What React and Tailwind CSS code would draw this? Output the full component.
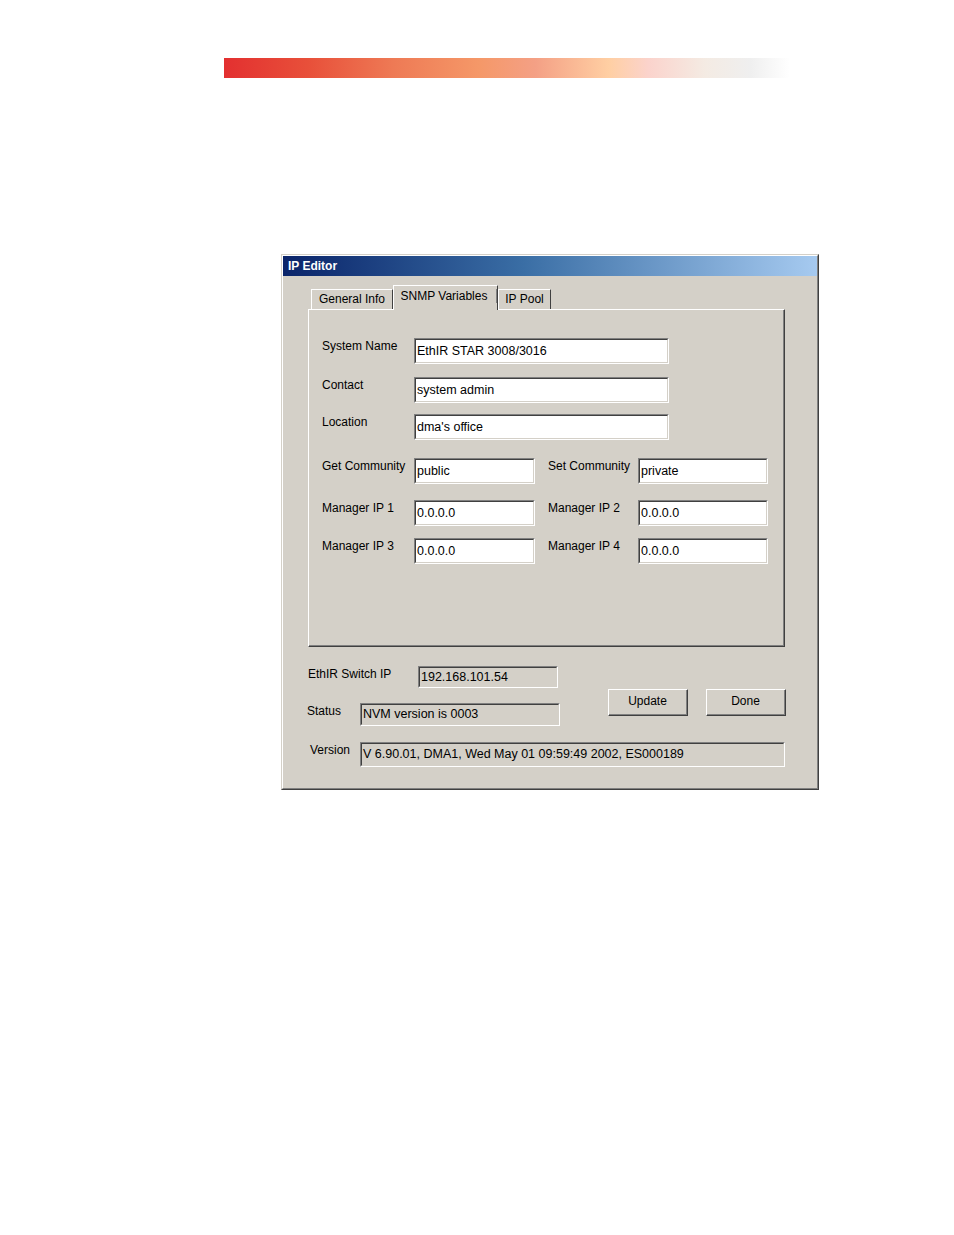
const font = { fontFamily: '"Liberation Sans", Arial, sans-serif' };

function Field({ value, w, h = "h-[26px]", readOnly = false }) {
  return (
    <div
      className={`${w} ${h} border-t border-l border-t-[#808080] border-l-[#808080] border-b border-r border-b-white border-r-white shrink-0`}
    >
      <div
        className={`h-full border-t border-l border-t-[#404040] border-l-[#404040] border-b border-r border-b-[#d4d0c8] border-r-[#d4d0c8] ${
          readOnly ? "bg-[#d4d0c8]" : "bg-white"
        } flex items-center pl-[1px] pb-[1px] text-[12.5px] leading-[14px] text-black whitespace-nowrap overflow-hidden`}
      >
        {value}
      </div>
    </div>
  );
}

function Button({ children }) {
  return (
    <div className="w-[80px] h-[27px] border-t border-l border-t-white border-l-white border-b border-r border-b-[#404040] border-r-[#404040]">
      <div className="h-full border-b border-r border-b-[#808080] border-r-[#808080] flex items-center justify-center text-[12px] leading-[14px] pb-[2px]">
        {children}
      </div>
    </div>
  );
}

function Label({ children, w }) {
  return <div className={`${w} shrink-0 text-[12px] leading-[14px] text-black pt-[1px] whitespace-nowrap`}>{children}</div>;
}

function Tab({ children, active, w }) {
  if (active) {
    return (
      <div
        className={`${w} h-[25px] -mb-[1px] relative z-10 bg-[#d4d0c8] border-t border-l border-t-white border-l-white border-r border-r-[#404040] flex items-start justify-center pt-[3px] text-[12px] leading-[14px]`}
      >
        <span className="border-r border-r-[#808080] w-full text-center pr-[2px]">{children}</span>
      </div>
    );
  }
  return (
    <div
      className={`${w} h-[20px] bg-[#d4d0c8] border-t border-l border-t-white border-l-white border-r border-r-[#404040] flex items-end justify-center pb-[3px] text-[12px] leading-[14px]`}
    >
      {children}
    </div>
  );
}

export default function App() {
  return (
    <div className="bg-white w-[954px] h-[1235px] overflow-hidden" style={font}>
      {/* red header rule */}
      <div className="pt-[58px] pl-[224px]">
        <div className="w-[566px] h-[20px] bg-[linear-gradient(90deg,#e33030_0%,#e8503a_15%,#ee7a55_30%,#f59868_45%,#f4a085_55%,#ffcfa3_68%,#fbd3cc_75%,#f4ebe3_85%,#efefef_93%,#ffffff_100%)]" />
      </div>

      {/* dialog window */}
      <div className="mt-[176px] ml-[281px] w-[538px] h-[536px] bg-[#d4d0c8] border-t border-l border-t-[#d4d0c8] border-l-[#d4d0c8] border-b border-r border-b-[#404040] border-r-[#404040]">
        <div className="h-full border-t border-l border-t-white border-l-white border-b border-r border-b-[#808080] border-r-[#808080] flex flex-col">
          <div className="h-[20px] bg-[linear-gradient(90deg,#0a246a,#3a6ea5_45%,#a6caf0)] flex items-center pl-[5px] text-white font-bold text-[12px] leading-[14px]">
            IP Editor
          </div>

          <div className="pl-[25px] pt-[8px]">
            {/* tabs */}
            <div className="flex items-end pl-[3px] h-[25px]">
              <Tab w="w-[82px]">General Info</Tab>
              <Tab w="w-[105px]" active>
                SNMP Variables
              </Tab>
              <Tab w="w-[53px]">IP Pool</Tab>
            </div>

            {/* tab panel */}
            <div className="w-[477px] h-[338px] border-t border-l border-t-white border-l-white border-b border-r border-b-[#404040] border-r-[#404040]">
              <div className="h-full border-b border-r border-b-[#808080] border-r-[#808080] pl-[13px] pt-[28px] flex flex-col">
                <div className="flex items-start">
                  <Label w="w-[92px]">System Name</Label>
                  <Field w="w-[255px]" value="EthIR STAR 3008/3016" />
                </div>
                <div className="flex items-start mt-[13px]">
                  <Label w="w-[92px]">Contact</Label>
                  <Field w="w-[255px]" value="system admin" />
                </div>
                <div className="flex items-start mt-[11px]">
                  <Label w="w-[92px]">Location</Label>
                  <Field w="w-[255px]" value="dma's office" />
                </div>
                <div className="flex items-start mt-[18px]">
                  <Label w="w-[92px]">Get Community</Label>
                  <Field w="w-[121px]" value="public" />
                  <div className="w-[13px]" />
                  <Label w="w-[90px]">Set Community</Label>
                  <Field w="w-[130px]" value="private" />
                </div>
                <div className="flex items-start mt-[16px]">
                  <Label w="w-[92px]">Manager IP 1</Label>
                  <Field w="w-[121px]" value="0.0.0.0" />
                  <div className="w-[13px]" />
                  <Label w="w-[90px]">Manager IP 2</Label>
                  <Field w="w-[130px]" value="0.0.0.0" />
                </div>
                <div className="flex items-start mt-[12px]">
                  <Label w="w-[92px]">Manager IP 3</Label>
                  <Field w="w-[121px]" value="0.0.0.0" />
                  <div className="w-[13px]" />
                  <Label w="w-[90px]">Manager IP 4</Label>
                  <Field w="w-[130px]" value="0.0.0.0" />
                </div>
              </div>
            </div>

            {/* bottom area */}
            <div className="flex mt-[19px]">
              <div className="flex flex-col">
                <div className="flex items-start">
                  <Label w="w-[110px]">EthIR Switch IP</Label>
                  <Field w="w-[140px]" h="h-[22px]" readOnly value="192.168.101.54" />
                </div>
                <div className="flex items-start mt-[15px] -ml-[1px]">
                  <Label w="w-[53px]">Status</Label>
                  <Field w="w-[200px]" h="h-[23px]" readOnly value="NVM version is 0003" />
                </div>
              </div>
              <div className="flex gap-[18px] ml-[48px] mt-[23px]">
                <Button>Update</Button>
                <Button>Done</Button>
              </div>
            </div>
            <div className="flex items-start mt-[16px] ml-[2px]">
              <Label w="w-[50px]">Version</Label>
              <Field w="w-[425px]" h="h-[25px]" readOnly value="V 6.90.01, DMA1, Wed May 01 09:59:49 2002, ES000189" />
            </div>
          </div>
        </div>
      </div>
    </div>
  );
}
